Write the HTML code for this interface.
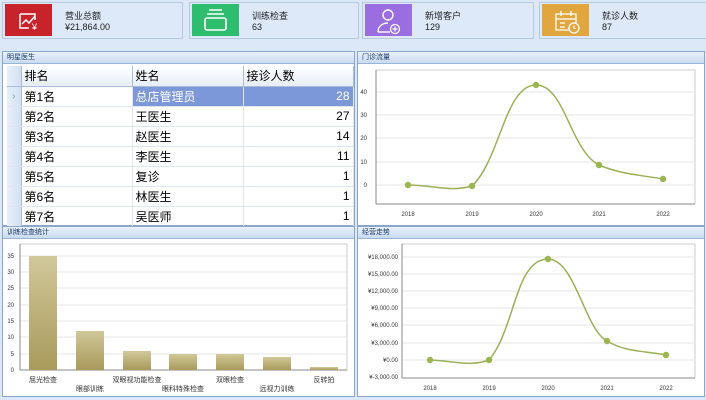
<!DOCTYPE html>
<html><head><meta charset="utf-8"><style>
*{margin:0;padding:0;box-sizing:border-box}
body{width:706px;height:400px;background:#dce8f7;font-family:"Liberation Sans","Noto Sans CJK SC",sans-serif;position:relative;overflow:hidden}
.card{position:absolute;top:2px;height:37px;background:#dde9f8;border:1px solid #b7c9de}
.ic{position:absolute;left:2px;top:1px;width:47px;height:32px}
.card .t{position:absolute;left:62px;top:6px;font-size:9px;color:#222}
.card .v{position:absolute;left:62px;top:19px;font-size:9px;color:#222}
.panel{position:absolute;background:#fff;border:1px solid #8aa6c8}
.ph{position:absolute;left:0;right:0;top:0;height:12px;background:linear-gradient(#e9f1fb,#c9dbf1);border-bottom:1px solid #9bb5d6;font-size:7px;color:#1a3a6a;padding-left:4px;line-height:12px}
table{border-collapse:collapse;position:absolute;left:4px;top:14px;font-size:12px}
td{border-right:1px solid #dfe6ef;border-bottom:1px solid #dfe6ef;height:20px;padding:0 3px;white-space:nowrap}
th{height:20px;font-weight:normal;text-align:left;padding:0 3px;background:linear-gradient(#fff,#e7eef8);border-right:1px solid #a9bdd6;border-bottom:1px solid #a9bdd6;font-size:12px}
td.rh{background:linear-gradient(90deg,#e8eff9,#d3e0f1);border-right:1px solid #a9bdd6;width:14px;padding:0;color:#7aa0d0;font-size:10px;text-align:center}
.sel td{background:#7d98d9;color:#fff}
.sel td.rh{background:linear-gradient(90deg,#e8eff9,#d3e0f1);color:#7aa0d0}
svg text{font-family:"Liberation Sans","Noto Sans CJK SC",sans-serif}
</style></head><body>

<div class="card" style="left:2px;width:181px"><div class="ic" style="background:#c8232b"><svg width="47" height="32"><path d="M15 10h12M15 10v14h9M30 16v-6h-4" stroke="#fff" stroke-width="1.5" fill="none"/><path d="M17 20l4-4 3 3 6-7" stroke="#fff" stroke-width="1.5" fill="none"/><text x="27" y="26" fill="#fff" font-size="9">¥</text></svg></div><div class="t">营业总额</div><div class="v">¥21,864.00</div></div>
<div class="card" style="left:189px;width:170px"><div class="ic" style="background:#2ebd6f"><svg width="47" height="32"><rect x="13" y="14" width="21" height="12" rx="2" stroke="#fff" stroke-width="1.6" fill="none"/><path d="M15 10h17M17 6h13" stroke="#fff" stroke-width="1.6"/></svg></div><div class="t">训练检查</div><div class="v">63</div></div>
<div class="card" style="left:362px;width:172px"><div class="ic" style="background:#9a6de0"><svg width="47" height="32"><circle cx="23" cy="11" r="5" stroke="#fff" stroke-width="1.4" fill="none"/><path d="M13 28c0-6 5-9 10-9" stroke="#fff" stroke-width="1.4" fill="none"/><path d="M13 28h12" stroke="#fff" stroke-width="1.4"/><circle cx="30" cy="25" r="4.5" stroke="#fff" stroke-width="1.3" fill="none"/><path d="M30 22.5v5M27.5 25h5" stroke="#fff" stroke-width="1.2"/></svg></div><div class="t">新增客户</div><div class="v">129</div></div>
<div class="card" style="left:539px;width:170px"><div class="ic" style="background:#e2a63e"><svg width="47" height="32"><path d="M30 10h4v16H14V10h16M14 15h20M19 7v5M29 7v5M18 19h5M18 23h5" stroke="#fff" stroke-width="1.3" fill="none"/><circle cx="32" cy="24" r="5" stroke="#fff" stroke-width="1.3" fill="#e2a63e"/><path d="M32 21.5v3h2" stroke="#fff" stroke-width="1.1" fill="none"/></svg></div><div class="t">就诊人数</div><div class="v">87</div></div>

<div class="panel" style="left:2px;top:51px;width:353px;height:175px"><div class="ph">明星医生</div>
<table>
<tr><th style="width:14px;background:linear-gradient(90deg,#e8eff9,#d3e0f1)"></th><th style="width:111px">排名</th><th style="width:111px">姓名</th><th style="width:110px">接诊人数</th></tr>
<tr class="sel"><td class="rh">›</td><td style="background:#fff;color:#000">第1名</td><td>总店管理员</td><td style="text-align:right">28</td></tr>
<tr><td class="rh"></td><td>第2名</td><td>王医生</td><td style="text-align:right">27</td></tr>
<tr><td class="rh"></td><td>第3名</td><td>赵医生</td><td style="text-align:right">14</td></tr>
<tr><td class="rh"></td><td>第4名</td><td>李医生</td><td style="text-align:right">11</td></tr>
<tr><td class="rh"></td><td>第5名</td><td>复诊</td><td style="text-align:right">1</td></tr>
<tr><td class="rh"></td><td>第6名</td><td>林医生</td><td style="text-align:right">1</td></tr>
<tr><td class="rh"></td><td>第7名</td><td>吴医师</td><td style="text-align:right">1</td></tr>
</table></div>

<div class="panel" style="left:357px;top:51px;width:348px;height:175px"><div class="ph">门诊流量</div></div>
<svg style="position:absolute;left:0;top:0" width="706" height="400">
<g font-size="6" fill="#333">
<rect x="376" y="70" width="319" height="134" fill="#fff" stroke="#ccc"/>
<g stroke="#e6e6e6"><line x1="376" y1="92" x2="695" y2="92"/><line x1="376" y1="115" x2="695" y2="115"/><line x1="376" y1="138" x2="695" y2="138"/><line x1="376" y1="162" x2="695" y2="162"/><line x1="376" y1="185" x2="695" y2="185"/></g>
<line x1="376" y1="70" x2="376" y2="204" stroke="#888"/><line x1="376" y1="204" x2="695" y2="204" stroke="#888"/>
<text x="367" y="94" text-anchor="end">40</text><text x="367" y="117" text-anchor="end">30</text><text x="367" y="140" text-anchor="end">20</text><text x="367" y="164" text-anchor="end">10</text><text x="367" y="187" text-anchor="end">0</text>
<text x="408" y="216" text-anchor="middle">2018</text><text x="472" y="216" text-anchor="middle">2019</text><text x="536" y="216" text-anchor="middle">2020</text><text x="599" y="216" text-anchor="middle">2021</text><text x="663" y="216" text-anchor="middle">2022</text>
<path d="M408 185C440 186 450 192 472 186C500 160 505 85 536 85C565 85 570 150 599 165C620 174 640 175 663 179" stroke="#9bb058" stroke-width="1.5" fill="none"/>
<g fill="#9bb550"><circle cx="408" cy="185" r="3.2"/><circle cx="472" cy="186" r="3.2"/><circle cx="536" cy="85" r="3.2"/><circle cx="599" cy="165" r="3.2"/><circle cx="663" cy="179" r="3.2"/></g>
</g>
</svg>

<div class="panel" style="left:2px;top:226px;width:353px;height:171px"><div class="ph">训练检查统计</div></div>
<div class="panel" style="left:357px;top:226px;width:348px;height:171px"><div class="ph">经营走势</div></div>
<svg style="position:absolute;left:0;top:0" width="706" height="400">
<defs><linearGradient id="b" x1="0" y1="0" x2="0" y2="1"><stop offset="0" stop-color="#d1c89a"/><stop offset="1" stop-color="#a89a5a"/></linearGradient></defs>
<g font-size="6" fill="#333">
<rect x="20" y="244" width="327" height="126" fill="#fff" stroke="#ccc"/>
<g stroke="#e6e6e6"><line x1="20" y1="256" x2="347" y2="256"/><line x1="20" y1="272" x2="347" y2="272"/><line x1="20" y1="288" x2="347" y2="288"/><line x1="20" y1="305" x2="347" y2="305"/><line x1="20" y1="321" x2="347" y2="321"/><line x1="20" y1="337" x2="347" y2="337"/><line x1="20" y1="354" x2="347" y2="354"/></g>
<line x1="20" y1="244" x2="20" y2="370" stroke="#888"/><line x1="20" y1="370" x2="347" y2="370" stroke="#888"/>
<g text-anchor="end"><text x="14" y="258">35</text><text x="14" y="274">30</text><text x="14" y="290">25</text><text x="14" y="307">20</text><text x="14" y="323">15</text><text x="14" y="339">10</text><text x="14" y="356">5</text><text x="14" y="372">0</text></g>
<g fill="url(#b)"><rect x="29" y="256" width="28" height="114"/><rect x="76" y="331" width="28" height="39"/><rect x="123" y="351" width="28" height="19"/><rect x="169" y="354" width="28" height="16"/><rect x="216" y="354" width="28" height="16"/><rect x="263" y="357" width="28" height="13"/><rect x="310" y="367" width="28" height="3"/></g>
<g text-anchor="middle" font-size="7"><text x="43" y="382">屈光检查</text><text x="90" y="391">眼部训练</text><text x="137" y="382">双眼视功能检查</text><text x="183" y="391">眼科特殊检查</text><text x="230" y="382">双眼检查</text><text x="277" y="391">远视力训练</text><text x="324" y="382">反转拍</text></g>

<rect x="402" y="244" width="293" height="134" fill="#fff" stroke="#ccc"/>
<g stroke="#e6e6e6"><line x1="402" y1="257" x2="695" y2="257"/><line x1="402" y1="274" x2="695" y2="274"/><line x1="402" y1="291" x2="695" y2="291"/><line x1="402" y1="308" x2="695" y2="308"/><line x1="402" y1="325" x2="695" y2="325"/><line x1="402" y1="343" x2="695" y2="343"/><line x1="402" y1="360" x2="695" y2="360"/></g>
<line x1="402" y1="244" x2="402" y2="378" stroke="#888"/><line x1="402" y1="378" x2="695" y2="378" stroke="#888"/>
<g text-anchor="end"><text x="398" y="259">¥18,000.00</text><text x="398" y="276">¥15,000.00</text><text x="398" y="293">¥12,000.00</text><text x="398" y="310">¥9,000.00</text><text x="398" y="327">¥6,000.00</text><text x="398" y="345">¥3,000.00</text><text x="398" y="362">¥0.00</text><text x="398" y="379">¥-3,000.00</text></g>
<g text-anchor="middle"><text x="430" y="390">2018</text><text x="489" y="390">2019</text><text x="548" y="390">2020</text><text x="607" y="390">2021</text><text x="666" y="390">2022</text></g>
<path d="M430 360C455 361 470 367 489 360C515 330 515 259 548 259C575 259 585 330 607 341C625 352 645 351 666 355" stroke="#9bb058" stroke-width="1.5" fill="none"/>
<g fill="#9bb550"><circle cx="430" cy="360" r="3.2"/><circle cx="489" cy="360" r="3.2"/><circle cx="548" cy="259" r="3.2"/><circle cx="607" cy="341" r="3.2"/><circle cx="666" cy="355" r="3.2"/></g>
</g>
</svg>
</body></html>
